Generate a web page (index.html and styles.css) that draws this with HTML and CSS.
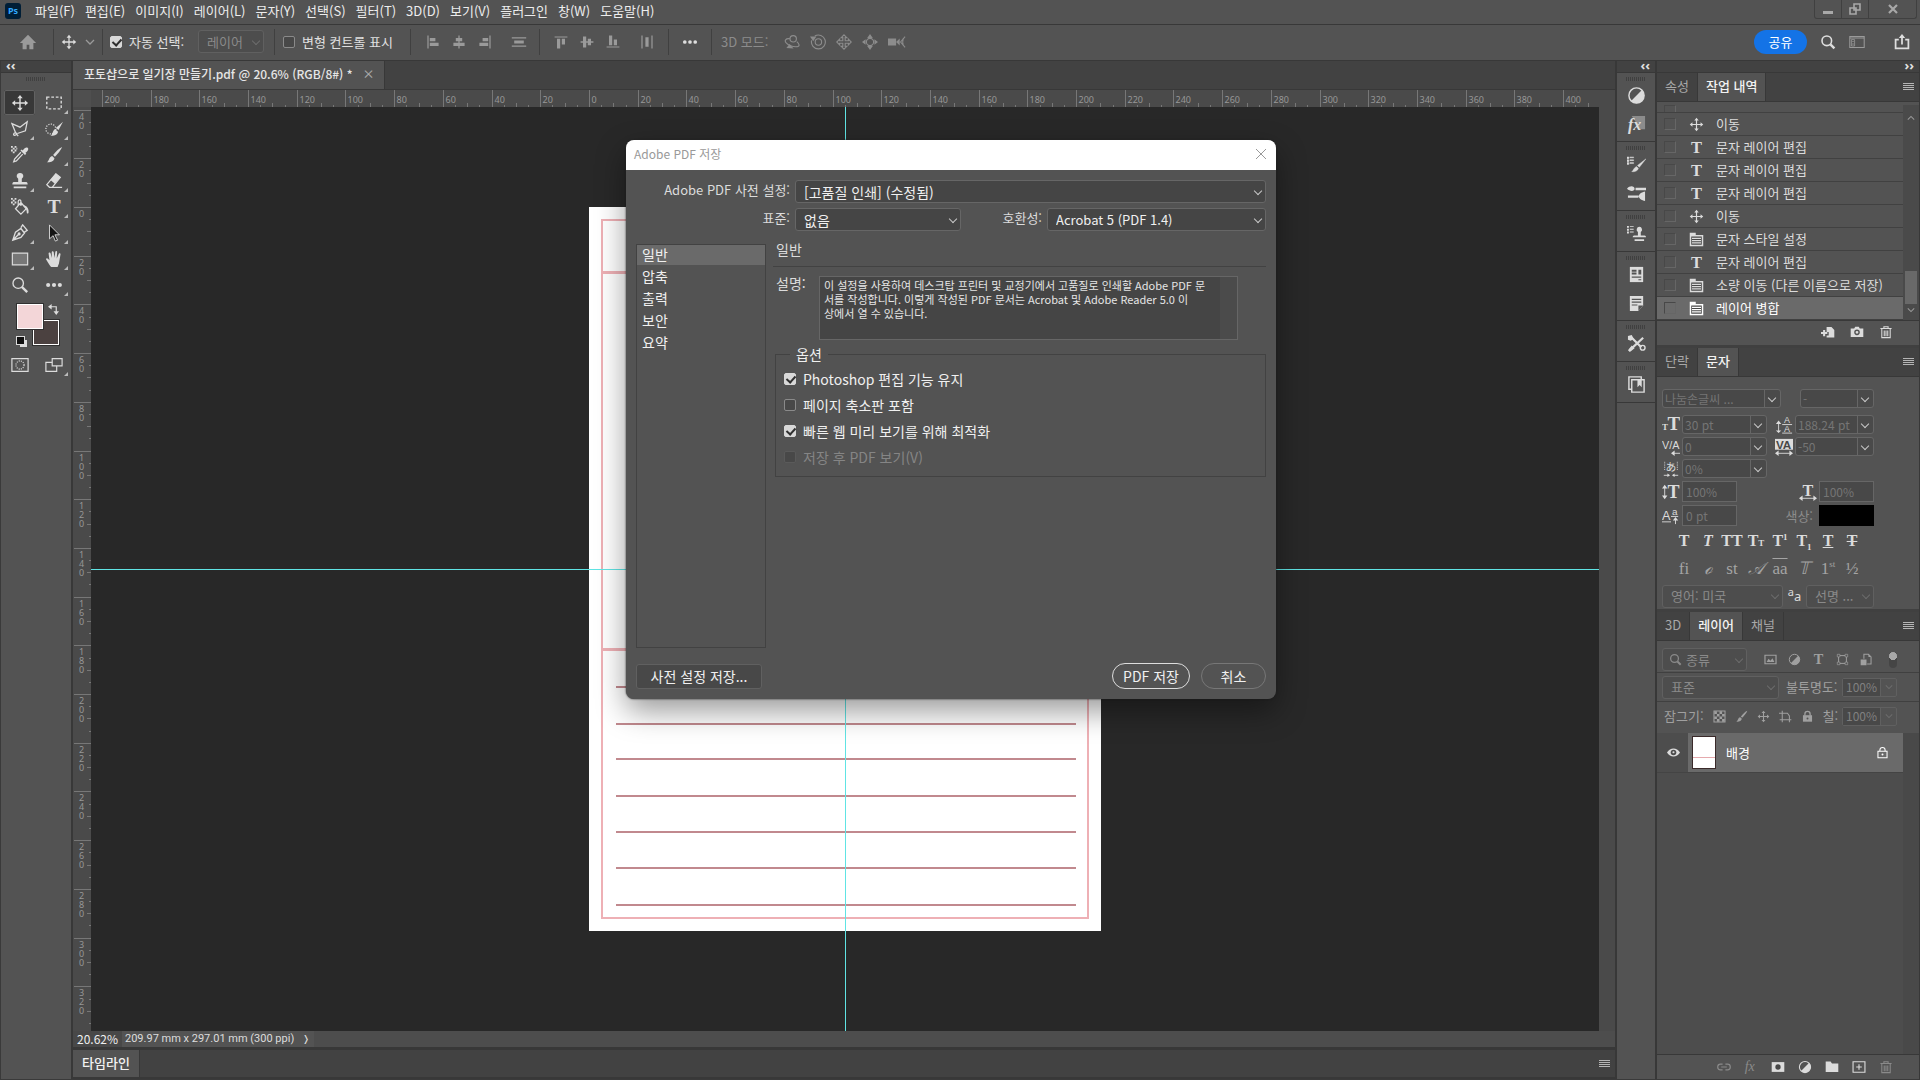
FILE: index.html
```html
<!DOCTYPE html>
<html lang="ko">
<head>
    <meta charset="UTF-8">
    <meta name="viewport" content="width=device-width, initial-scale=1.0">
    <title>포토샵으로 일기장 만들기.pdf</title>
    <link rel="stylesheet" href="styles.css">
</head>
<body>
    <!-- icon set -->
    <svg class="sprite" aria-hidden="true">
        <symbol id="move" viewBox="0 0 20 20"><path d="M10 1l3 3.600h-2.200v4.600h4.600V7L19 10l-3.600 3v-2.200h-4.600v4.600H13L10 19l-3-3.600h2.200v-4.600H4.600V13L1 10l3.600-3v2.200h4.600V4.600H7z" fill="currentColor"/></symbol>
        <symbol id="home" viewBox="0 0 20 20"><path d="M10 2L1 11h3v7h4.500v-5h3v5H16v-7h3z" fill="currentColor"/></symbol>
        <symbol id="chev" viewBox="0 0 10 10"><path d="M1 3l4 4 4-4" fill="none" stroke="currentColor" stroke-width="1.300"/></symbol>
        <symbol id="al-left" viewBox="0 0 20 20"><path d="M3 2h1.500v16H3zM6 5h7v4H6zM6 11h11v4H6z" fill="currentColor"/></symbol>
        <symbol id="al-center" viewBox="0 0 20 20"><path d="M9.200 2h1.600v16H9.200zM6 5h8v4H6zM3 11h14v4H3z" fill="currentColor"/></symbol>
        <symbol id="al-right" viewBox="0 0 20 20"><path d="M15.500 2H17v16h-1.500zM7 5h7v4H7zM3 11h11v4H3z" fill="currentColor"/></symbol>
        <symbol id="dist-v" viewBox="0 0 20 20"><path d="M1 4h18v1.500H1zM4 8h12v4H4zM1 14.500h18V16H1z" fill="currentColor"/></symbol>
        <symbol id="al-top" viewBox="0 0 20 20"><path d="M2 3h16v1.500H2zM5 6h4v12H5zM11 6h4v7h-4z" fill="currentColor"/></symbol>
        <symbol id="al-mid" viewBox="0 0 20 20"><path d="M2 9.200h16v1.600H2zM5 3h4v14H5zM11 6h4v8h-4z" fill="currentColor"/></symbol>
        <symbol id="al-bot" viewBox="0 0 20 20"><path d="M2 15.500h16V17H2zM5 2h4v12H5zM11 7h4v7h-4z" fill="currentColor"/></symbol>
        <symbol id="dist-h" viewBox="0 0 20 20"><path d="M3 2h1.500v16H3zM8 4h4v12H8zM15.500 2H17v16h-1.500z" fill="currentColor"/></symbol>
        <symbol id="dots" viewBox="0 0 20 20"><g fill="currentColor"><circle cx="3.500" cy="10" r="2.300"/><circle cx="10" cy="10" r="2.300"/><circle cx="16.500" cy="10" r="2.300"/></g></symbol>
        <symbol id="orbit" viewBox="0 0 20 20"><g fill="none" stroke="currentColor" stroke-width="1.400"><circle cx="11.500" cy="6" r="4"/><path d="M7.500 6C2 5 0 8.500 3 11.500c3 3 8 4.500 12 4.500 5 0 5-3 1-6.500"/></g><path d="M3 17.500l9 .5-5-5.500z" fill="currentColor"/></symbol>
        <symbol id="roll" viewBox="0 0 20 20"><g fill="none" stroke="currentColor" stroke-width="1.400"><circle cx="10.500" cy="10" r="4"/><path d="M6 2.500a8.700 8.700 0 1 1-4 5.500"/></g><path d="M0 3h8L4 9z" fill="currentColor"/></symbol>
        <symbol id="pan3d" viewBox="0 0 20 20"><path d="M10 1l3.500 3.500h-2v4h4v-2L19 10l-3.500 3.500v-2h-4v4h2L10 19l-3.500-3.500h2v-4h-4v2L1 10l3.500-3.500v2h4v-4h-2z" fill="none" stroke="currentColor" stroke-width="1.400"/></symbol>
        <symbol id="slide3d" viewBox="0 0 20 20"><circle cx="10" cy="10" r="4.500" fill="none" stroke="currentColor" stroke-width="1.400"/><path d="M10 0l3.500 5h-7zM10 20l-3.500-5h7zM0 10l4.500-3.500v7zM20 10l-4.500 3.500v-7z" fill="currentColor"/></symbol>
        <symbol id="cam3d" viewBox="0 0 20 20"><path d="M0 6h9v8H0zM9 10l4-4v8z" fill="currentColor"/><path d="M19 4l-5 6 5 6M17 6c-1 3-1 5 0 8" fill="none" stroke="currentColor" stroke-width="1.200"/></symbol>
        <symbol id="search" viewBox="0 0 20 20"><circle cx="8.500" cy="8.500" r="6" fill="none" stroke="currentColor" stroke-width="2"/><path d="M13 13l5 5" stroke="currentColor" stroke-width="3"/></symbol>
        <symbol id="workspace" viewBox="0 0 20 20"><path d="M1 3h18v14H1zM1 5h18" fill="none" stroke="currentColor" stroke-width="1.300"/><path d="M3 7h4v8H3z" fill="none" stroke="currentColor"/><path d="M4 9h2v1H4zM4 12h2v1H4z" fill="currentColor"/></symbol>
        <symbol id="share" viewBox="0 0 20 20"><path d="M6 7H2v11h16V7h-4M10 13V3" fill="none" stroke="currentColor" stroke-width="2.200"/><path d="M10 0l4 5H6z" fill="currentColor"/></symbol>
        <symbol id="menu" viewBox="0 0 12 10"><path d="M0 1.500h11M0 3.500h11M0 5.500h11M0 7.500h11" stroke="currentColor"/></symbol>
        <symbol id="marquee" viewBox="0 0 20 20"><rect x="2" y="3.500" width="16" height="13" fill="none" stroke="currentColor" stroke-width="1.500" stroke-dasharray="3 2"/></symbol>
        <symbol id="lasso" viewBox="0 0 20 20"><path d="M5 14L1 4l9 4 8-6-2 10-9 3M5 14c-2 0-3 3-1 3s3-2 1-3l3 4" fill="none" stroke="currentColor" stroke-width="1.400"/></symbol>
        <symbol id="qselect" viewBox="0 0 20 20"><circle cx="6.500" cy="10" r="5.500" fill="none" stroke="currentColor" stroke-width="1.400" stroke-dasharray="1.300 1.500"/><path d="M20 2l-5 9-3-2zM11 10l3.500 3C14 16.500 10 18 6 17.500c3-1.500 2-5 5-7.500z" fill="currentColor"/></symbol>
        <symbol id="eyedrop" viewBox="0 0 20 20"><path d="M0 0h2v2H0zM4 0h2v2H4zM2 2h2v2H2zM0 4h2v2H0zM4 4h2v2H4zM2 6h2v2H2zM6 2h1v2H6z" fill="currentColor"/><path d="M13 5c2-3 4-4 5.500-3s.5 4-2.500 5.500l1 1-1.500 1.500-5-5L12 4z" fill="currentColor"/><path d="M11 7l-7 7.500-1 3 3-1L13 9" fill="none" stroke="currentColor" stroke-width="1.400"/></symbol>
        <symbol id="brush" viewBox="0 0 20 20"><path d="M19 1c-1 3-5 8-8 11L9 10c3-4 7-8 10-9zM8 11l2.500 2.500C10 17 6 18.500 2 18c3-1.500 2-6 6-7z" fill="currentColor"/></symbol>
        <symbol id="stamp" viewBox="0 0 20 20"><path d="M10 1a3.500 3.500 0 0 1 2 6.500V11h5c1 0 1.500 1 1.500 3h-17c0-2 .5-3 1.500-3h5V7.500A3.500 3.500 0 0 1 10 1zM3 16h14v2H3z" fill="currentColor"/></symbol>
        <symbol id="eraser" viewBox="0 0 20 20"><path d="M12 2l5 4-6 7-5-4z" fill="currentColor"/><path d="M12 2l5 4-9 11H5l-3-3zM5 17h14" fill="none" stroke="currentColor" stroke-width="1.400"/></symbol>
        <symbol id="bucket" viewBox="0 0 20 20"><path d="M0 0h2v2H0zM4 0h2v2H4zM2 2h2v2H2zM0 4h2v2H0zM4 4h2v2H4zM2 6h2v2H2z" fill="currentColor"/><path d="M11 5l6 7-6 6-6-6zM11 9V4c0-3-3-2-3 0v4" fill="none" stroke="currentColor" stroke-width="1.400"/><path d="M13 8c4 0 7 3 6.500 8-.5 2-2 1.500-2 0S17 12 15 10z" fill="currentColor"/></symbol>
        <symbol id="type" viewBox="0 0 20 20"><text x="10" y="17" text-anchor="middle" font-family="Liberation Serif" font-size="22" font-weight="bold" fill="currentColor">T</text></symbol>
        <symbol id="pen" viewBox="0 0 20 20"><path d="M2 18L5 9l6-4 4 5-4 5zM2 18l6-6M11 4l2-3 5 6-3 2" fill="none" stroke="currentColor" stroke-width="1.500"/><circle cx="9" cy="11" r="1.700" fill="currentColor"/></symbol>
        <symbol id="arrow" viewBox="0 0 20 20"><path d="M5 1l11 11H11l3 6-2.500 1L9 13l-4 3.500z" fill="#151515" stroke="currentColor"/></symbol>
        <symbol id="rect" viewBox="0 0 20 20"><path d="M1.500 3.500h17v13h-17z" fill="#777" stroke="currentColor" stroke-width="1.300"/></symbol>
        <symbol id="hand" viewBox="0 0 20 20"><path d="M6 18C4 15 2 12 1 10c1-1.500 2-1 4 1.500L4 4c0-1.500 2-1.500 2.300 0L7.500 9V2.500c0-1.500 2-1.500 2.200 0L10.500 9l1-7c.3-1.500 2-1 2 .3L13 9.500 15.500 4c.8-1 2-.5 1.700 1L15.500 15l-1.500 4H7z" fill="currentColor"/></symbol>
        <symbol id="zoomt" viewBox="0 0 20 20"><circle cx="8" cy="8" r="5.800" fill="none" stroke="currentColor" stroke-width="1.500"/><path d="M12 12l6 6" stroke="currentColor" stroke-width="2.600"/></symbol>
        <symbol id="qmask" viewBox="0 0 20 20"><path d="M1 3h18v14H1z" fill="none" stroke="currentColor" stroke-width="1.300"/><circle cx="10" cy="10" r="4.500" fill="none" stroke="currentColor" stroke-width="1.300" stroke-dasharray="1.200 1.200"/></symbol>
        <symbol id="screen" viewBox="0 0 20 20"><path d="M1 7h12v10H1z" fill="none" stroke="currentColor" stroke-width="1.300"/><path d="M8 3h11v8H8z" fill="#535353" stroke="currentColor" stroke-width="1.300"/></symbol>
        <symbol id="swap" viewBox="0 0 12 12"><path d="M3 3h6v6" fill="none" stroke="currentColor" stroke-width="1.300"/><path d="M4 0v6L0 3zM6 8h6l-3 4z" fill="currentColor"/></symbol>
        <symbol id="adjust" viewBox="0 0 20 20"><circle cx="10" cy="10" r="8" fill="none" stroke="currentColor" stroke-width="1.500"/><path d="M15.700 4.300A8 8 0 0 1 4.300 15.700z" fill="currentColor"/></symbol>
        <symbol id="fxbox" viewBox="0 0 20 20"><path d="M5 1h14v14h-5z" fill="#8c8c8c"/><text x="1" y="16" font-family="Liberation Serif" font-style="italic" font-weight="bold" font-size="17" fill="currentColor">fx</text></symbol>
        <symbol id="fx" viewBox="0 0 20 20"><text x="1" y="15" font-family="Liberation Serif" font-style="italic" font-size="20" fill="currentColor">fx</text></symbol>
        <symbol id="brushes" viewBox="0 0 20 20"><path d="M0 2h2v2H0zM3 2h4v1H3zM0 5h2v2H0zM3 5h4v1H3zM0 8h2v2H0zM3 8h4v1H3zM20 4l-7 9-2-2zM10 12l2 2c-.5 3-4 4-7 3.500 2-1.500 2-4 5-5.500z" fill="currentColor" stroke="currentColor" stroke-width=".4"/></symbol>
        <symbol id="brushset" viewBox="0 0 20 20"><path d="M0 5c3-4 8-3 8 0s-5 3-8 0zM9 4h11v2.500H9zM1 12h11v2.500H1zM12 13c2-4 4-4 7-5v10c-3-1-5-1-7-5z" fill="currentColor"/></symbol>
        <symbol id="clone" viewBox="0 0 20 20"><path d="M0 2h2v2H0zM3 2h4v1H3zM0 5h2v2H0zM3 5h4v1H3zM0 8h2v2H0zM3 8h4v1H3zM13 3a3 3 0 0 1 1.500 5.500V12h4c1 0 1.500 1 1.500 2H6c0-1 .5-2 1.500-2h4V8.500A3 3 0 0 1 13 3zM8 16h10v2H8z" fill="currentColor"/></symbol>
        <symbol id="library" viewBox="0 0 20 20"><path d="M3 2h14v16H3z" fill="currentColor"/><path d="M5 5h5v2H5zM5 8h5v2H5zM12 5h3v5h-3zM5 12h10v1.500H5zM12 15h3v1h-3z" fill="#535353"/></symbol>
        <symbol id="notes" viewBox="0 0 20 20"><path d="M3 2h14v10l-5 6H3z" fill="currentColor"/><path d="M5 5h10v1.200H5zM5 8h10v1.200H5zM5 11h6v1.200H5zM12 18v-6h5z" fill="#535353"/></symbol>
        <symbol id="tools" viewBox="0 0 20 20"><path d="M5 4l10 10M3 17L17 4" stroke="currentColor" stroke-width="2.300"/><path d="M1 2l4-1 2 4-3 2-3-1zM1 17l4-5 3 3-5 4z" fill="currentColor"/><circle cx="16.500" cy="14.500" r="2.500" fill="none" stroke="currentColor" stroke-width="1.500"/></symbol>
        <symbol id="book" viewBox="0 0 20 20"><path d="M5 15H2V2h13v3M5 5h13v13H5z" fill="none" stroke="currentColor" stroke-width="1.500"/><path d="M11 5h4.500v8l-2.200-2.500L11 13z" fill="currentColor"/></symbol>
        <symbol id="doc" viewBox="0 0 20 20"><path d="M1 1h8v3h10v15H1z" fill="currentColor"/><path d="M3 6h14v11H3z" fill="#484848"/><path d="M4 8.500h12M4 11.500h12M4 14.500h12" stroke="currentColor" stroke-width="1.400"/></symbol>
        <symbol id="newdoc" viewBox="0 0 20 20"><path d="M8 3h7l4 4v11H8v-3h3v-5H8z" fill="currentColor"/><path d="M0 10h9v3H0zM3 7h3v9H3z" fill="currentColor"/></symbol>
        <symbol id="camera" viewBox="0 0 20 20"><path d="M1 5h5l1.500-2.500h5L14 5h5v12H1z" fill="currentColor"/><circle cx="10" cy="10.500" r="3" fill="none" stroke="#535353" stroke-width="2"/></symbol>
        <symbol id="trash" viewBox="0 0 20 20"><path d="M2 5h16M7 5V2.500h6V5M4 5v13h12V5M7.500 8v8M10 8v8M12.500 8v8" fill="none" stroke="currentColor" stroke-width="1.500"/></symbol>
        <symbol id="image" viewBox="0 0 20 20"><path d="M1.500 3.500h17v13h-17z" fill="none" stroke="currentColor" stroke-width="1.800"/><path d="M4 14l3-5 3 3 3-4 3 6z" fill="currentColor"/></symbol>
        <symbol id="shape" viewBox="0 0 20 20"><path d="M4 4h12v12H4z" fill="none" stroke="currentColor" stroke-width="1.500"/><path d="M2 2h4v4H2zM14 2h4v4h-4zM2 14h4v4H2zM14 14h4v4h-4z" fill="#535353" stroke="currentColor"/></symbol>
        <symbol id="smart" viewBox="0 0 20 20"><path d="M6 9V2h7l4 4v11h-6" fill="none" stroke="currentColor" stroke-width="1.600"/><path d="M13 2v4h4M1 10h9v9H1z" fill="currentColor"/></symbol>
        <symbol id="checker" viewBox="0 0 20 20"><path d="M1.500 1.500h17v17h-17z" fill="none" stroke="currentColor" stroke-width="1.600"/><path d="M2 2h4v4H2zM10 2h4v4h-4zM6 6h4v4H6zM14 6h4v4h-4zM2 10h4v4H2zM10 10h4v4h-4zM6 14h4v4H6zM14 14h4v4h-4z" fill="currentColor"/></symbol>
        <symbol id="artboard" viewBox="0 0 20 20"><path d="M0 5h5M5 1v4M5 15v4M1 15h18M16 9v10M5 5h8l3 4v6H5z" fill="none" stroke="currentColor" stroke-width="1.600"/></symbol>
        <symbol id="lockf" viewBox="0 0 20 20"><path d="M3 8h14v10H3z" fill="currentColor"/><path d="M6 9V6c0-5 8-5 8 0v3" fill="none" stroke="currentColor" stroke-width="2"/><circle cx="10" cy="13" r="1.500" fill="#535353"/></symbol>
        <symbol id="lock" viewBox="0 0 20 20"><path d="M3 8h14v10H3zM6 8V6c0-5 8-5 8 0v2" fill="none" stroke="currentColor" stroke-width="1.600"/><circle cx="10" cy="13" r="1.500" fill="currentColor"/></symbol>
        <symbol id="eye" viewBox="0 0 20 20"><path d="M0 10C5 2 15 2 20 10 15 18 5 18 0 10z" fill="currentColor"/><circle cx="10" cy="10" r="4.300" fill="#4d4d4d"/><circle cx="10" cy="9.500" r="1.600" fill="currentColor"/></symbol>
        <symbol id="link" viewBox="0 0 20 20"><path d="M8 6H5a4 4 0 0 0 0 8h3M12 6h3a4 4 0 0 1 0 8h-3M6 10h8" fill="none" stroke="currentColor" stroke-width="1.700"/></symbol>
        <symbol id="mask" viewBox="0 0 20 20"><path d="M1 3h18v14H1z" fill="currentColor"/><circle cx="10" cy="10" r="3.800" fill="#484848"/></symbol>
        <symbol id="folder" viewBox="0 0 20 20"><path d="M1 2h7l2 3h9v12H1z" fill="currentColor"/></symbol>
        <symbol id="new" viewBox="0 0 20 20"><path d="M1.500 2.500h17v15h-17zM10 6v8M6 10h8" fill="none" stroke="currentColor" stroke-width="1.600"/></symbol>
        <symbol id="c-size" viewBox="0 0 20 20"><g font-family="Liberation Serif" font-weight="bold" fill="currentColor"><text x="0" y="16" font-size="10">T</text><text x="6" y="16" font-size="21">T</text></g></symbol>
        <symbol id="c-lead" viewBox="0 0 20 20"><g font-family="Liberation Sans" font-size="10" fill="currentColor"><text x="10" y="8">A</text><text x="10" y="18">A</text></g><path d="M8 9.500h11M8 19h11M4 8v9" stroke="currentColor"/><path d="M4 5l3 4H1zM4 19l3-3H1z" fill="currentColor"/></symbol>
        <symbol id="c-kern" viewBox="0 0 20 20"><text x="0" y="12" font-family="Liberation Sans" font-size="12" fill="currentColor">V/A</text><path d="M12 17h8" stroke="currentColor"/><path d="M10 17l4-3v6z" fill="currentColor"/></symbol>
        <symbol id="c-track" viewBox="0 0 20 20"><path d="M0 1h20v12H0z" fill="currentColor"/><text x="1" y="12" font-family="Liberation Sans" font-weight="bold" font-size="13" fill="#484848">VA</text><path d="M3 17h14" stroke="currentColor"/><path d="M0 17l4-3v6zM20 17l-4 3v-6z" fill="currentColor"/></symbol>
        <symbol id="c-tsume" viewBox="0 0 20 20"><text x="4" y="12" font-family="Noto Sans CJK JP" font-size="12" fill="currentColor">あ</text><path d="M3 2v10M17 2v10" stroke="currentColor" stroke-dasharray="1 1"/><path d="M2 17h5M13 17h5" stroke="currentColor"/><path d="M9 17l-3-2v4zM11 17l3 2v-4z" fill="currentColor"/></symbol>
        <symbol id="c-vscale" viewBox="0 0 20 20"><text x="6" y="17" font-family="Liberation Serif" font-weight="bold" font-size="20" fill="currentColor">T</text><path d="M3 5v10" stroke="currentColor"/><path d="M3 2l3 4H0zM3 18l3-4H0z" fill="currentColor"/></symbol>
        <symbol id="c-hscale" viewBox="0 0 20 20"><text x="4" y="14" font-family="Liberation Serif" font-weight="bold" font-size="18" fill="currentColor">T</text><path d="M3 17h14" stroke="currentColor"/><path d="M0 17l4-3v6zM20 17l-4 3v-6z" fill="currentColor"/></symbol>
        <symbol id="c-base" viewBox="0 0 20 20"><g font-family="Liberation Sans" fill="currentColor"><text x="0" y="14" font-size="14">A</text><text x="11" y="9" font-size="11">a</text></g><path d="M0 16.500h10M10 10.500h8M15 13v6" stroke="currentColor"/><path d="M15 11l3 4h-6z" fill="currentColor"/></symbol>
    </svg>

    <header class="menubar">
        <span class="ps-logo">Ps</span>
        <nav class="menus">
            <a href="#">파일(F)</a><a href="#">편집(E)</a><a href="#">이미지(I)</a><a href="#">레이어(L)</a><a href="#">문자(Y)</a><a href="#">선택(S)</a><a href="#">필터(T)</a><a href="#">3D(D)</a><a href="#">보기(V)</a><a href="#">플러그인</a><a href="#">창(W)</a><a href="#">도움말(H)</a>
        </nav>
        <div class="win-buttons">
            <button aria-label="최소화"><svg viewBox="0 0 12 12"><path d="M1 8h10v3H1z" fill="currentColor"/></svg></button>
            <button aria-label="이전 크기로"><svg viewBox="0 0 12 12"><path d="M1 5h6v6H1zM5 1h6v6H5z" fill="none" stroke="currentColor" stroke-width="1.600"/></svg></button>
            <button class="win-close" aria-label="닫기"><svg viewBox="0 0 12 12"><path d="M2 2l8 8M10 2l-8 8" stroke="currentColor" stroke-width="2.200"/></svg></button>
        </div>
    </header>

    <div class="options">
        <div class="opt home"><svg class="ic18"><use href="#home"/></svg></div>
        <div class="opt cur-tool"><svg class="ic16 bright"><use href="#move"/></svg><svg class="ic10"><use href="#chev"/></svg></div>
        <div class="opt auto">
            <label class="check"><input type="checkbox" checked>자동 선택:</label>
            <span class="drop dim"><select aria-label="자동 선택 대상" disabled><option>레이어</option></select></span>
        </div>
        <div class="opt show"><label class="check"><input type="checkbox">변형 컨트롤 표시</label></div>
        <div class="opt align-h"><svg class="ic16"><use href="#al-left"/></svg><svg class="ic16"><use href="#al-center"/></svg><svg class="ic16"><use href="#al-right"/></svg><svg class="ic16 last"><use href="#dist-v"/></svg></div>
        <div class="opt align-v"><svg class="ic16"><use href="#al-top"/></svg><svg class="ic16"><use href="#al-mid"/></svg><svg class="ic16"><use href="#al-bot"/></svg><svg class="ic16 last"><use href="#dist-h"/></svg></div>
        <div class="opt more"><svg class="ic16 bright"><use href="#dots"/></svg></div>
        <div class="opt mode3d"><span>3D 모드:</span><svg class="ic16"><use href="#orbit"/></svg><svg class="ic16"><use href="#roll"/></svg><svg class="ic16"><use href="#pan3d"/></svg><svg class="ic16"><use href="#slide3d"/></svg><svg class="ic18"><use href="#cam3d"/></svg></div>
        <div class="opt-right">
            <button class="share">공유</button>
            <svg class="ic16 bright"><use href="#search"/></svg>
            <svg class="ic16"><use href="#workspace"/></svg>
            <svg class="ic16 bright"><use href="#share"/></svg>
        </div>
    </div>

    <main class="work">
        <aside class="toolbar">
            <div class="collapse">‹‹</div>
            <div class="grip"></div>
            <div class="tools">
                <button class="on" aria-label="이동"><svg><use href="#move"/></svg></button>
                <button class="sub" aria-label="선택 윤곽"><svg><use href="#marquee"/></svg></button>
                <button class="sub" aria-label="올가미"><svg><use href="#lasso"/></svg></button>
                <button class="sub" aria-label="빠른 선택"><svg><use href="#qselect"/></svg></button>
                <button aria-label="스포이드"><svg><use href="#eyedrop"/></svg></button>
                <button class="sub" aria-label="브러시"><svg><use href="#brush"/></svg></button>
                <button class="sub" aria-label="도장"><svg><use href="#stamp"/></svg></button>
                <button class="sub" aria-label="지우개"><svg><use href="#eraser"/></svg></button>
                <button aria-label="페인트 통"><svg><use href="#bucket"/></svg></button>
                <button class="sub" aria-label="문자"><svg><use href="#type"/></svg></button>
                <button class="sub" aria-label="펜"><svg><use href="#pen"/></svg></button>
                <button class="sub" aria-label="패스 선택"><svg><use href="#arrow"/></svg></button>
                <button class="sub" aria-label="사각형"><svg><use href="#rect"/></svg></button>
                <button class="sub" aria-label="손"><svg><use href="#hand"/></svg></button>
                <button aria-label="돋보기"><svg><use href="#zoomt"/></svg></button>
                <button class="sub" aria-label="도구 모음 편집"><svg><use href="#dots"/></svg></button>
            </div>
            <div class="swatches">
                <span class="bg"></span><span class="fg"></span>
                <svg class="swap"><use href="#swap"/></svg>
                <span class="def-bg"></span><span class="def-fg"></span>
            </div>
            <div class="tools">
                <button aria-label="빠른 마스크"><svg><use href="#qmask"/></svg></button>
                <button class="sub" aria-label="화면 모드"><svg><use href="#screen"/></svg></button>
            </div>
        </aside>

        <section class="document">
            <div class="doc-tabs"><div class="doc-tab">포토샵으로 일기장 만들기.pdf @ 20.6% (RGB/8#) *<button aria-label="닫기">×</button></div></div>
            <div class="viewport">
                <div class="corner"></div>
                <svg class="ruler" id="ruler-h"></svg>
                <div class="scroll-top"></div>
                <svg class="ruler" id="ruler-v"></svg>
                <div class="canvas">
                    <svg class="page" viewBox="0 0 512 724">
                        <g fill="none" stroke="#eeb0b5" stroke-width="2">
                            <path d="M13 13h486v698H13z"/>
                            <path d="M13 65.500h486M13 442.500h486" stroke-width="3"/>
                        </g>
                        <path d="M27 480h460M27 517h460M27 552h460M27 589h460M27 625h460M27 661h460M27 698h460" stroke="#c1898e" stroke-width="2"/>
                    </svg>
                    <div class="guide-v"></div>
                    <div class="guide-h"></div>
                </div>
                <div class="scroll"></div>
            </div>
            <div class="status"><span class="zoom">20.62%</span><span class="size">209.97 mm x 297.01 mm (300 ppi)<b>❭</b></span></div>
            <div class="timeline"><span class="tab on">타임라인</span><svg class="burger"><use href="#menu"/></svg></div>
        </section>

        <aside class="dock">
            <div class="collapse right">‹‹</div>
            <div class="group"><i class="grip"></i><svg><use href="#adjust"/></svg><svg><use href="#fxbox"/></svg></div>
            <div class="group"><i class="grip"></i><svg><use href="#brushes"/></svg><svg><use href="#brushset"/></svg></div>
            <div class="group"><i class="grip"></i><svg><use href="#clone"/></svg></div>
            <div class="group"><i class="grip"></i><svg><use href="#library"/></svg><svg><use href="#notes"/></svg></div>
            <div class="group"><i class="grip"></i><svg><use href="#tools"/></svg></div>
            <div class="group"><i class="grip"></i><svg><use href="#book"/></svg></div>
        </aside>

        <aside class="panels">
            <div class="collapse right">››</div>

            <div class="tabs"><span class="tab">속성</span><span class="tab on">작업 내역</span><svg class="burger"><use href="#menu"/></svg></div>
            <div class="history">
                <ul>
                    <li class="cut"><i></i></li>
                    <li><i></i><svg><use href="#move"/></svg>이동</li>
                    <li><i></i><svg><use href="#type"/></svg>문자 레이어 편집</li>
                    <li><i></i><svg><use href="#type"/></svg>문자 레이어 편집</li>
                    <li><i></i><svg><use href="#type"/></svg>문자 레이어 편집</li>
                    <li><i></i><svg><use href="#move"/></svg>이동</li>
                    <li><i></i><svg><use href="#doc"/></svg>문자 스타일 설정</li>
                    <li><i></i><svg><use href="#type"/></svg>문자 레이어 편집</li>
                    <li><i></i><svg><use href="#doc"/></svg>소량 이동 (다른 이름으로 저장)</li>
                    <li class="on"><i></i><svg><use href="#doc"/></svg>레이어 병합</li>
                </ul>
                <div class="bar"><svg class="up"><use href="#chev"/></svg><span class="thumb"></span><svg><use href="#chev"/></svg></div>
            </div>
            <div class="hist-foot"><svg><use href="#newdoc"/></svg><svg><use href="#camera"/></svg><svg><use href="#trash"/></svg></div>

            <div class="tabs"><span class="tab">단락</span><span class="tab on">문자</span><svg class="burger"><use href="#menu"/></svg></div>
            <div class="character">
                <div class="crow fonts">
                    <span class="drop split"><select aria-label="글꼴" disabled><option>나눔손글씨 ...</option></select></span>
                    <span class="drop split"><select aria-label="글꼴 스타일" disabled><option>-</option></select></span>
                </div>
                <div class="crow">
                    <svg><use href="#c-size"/></svg><span class="drop split"><select aria-label="글꼴 크기" disabled><option>30 pt</option></select></span>
                    <svg><use href="#c-lead"/></svg><span class="drop split"><select aria-label="행간" disabled><option>188.24 pt</option></select></span>
                </div>
                <div class="crow">
                    <svg><use href="#c-kern"/></svg><span class="drop split"><select aria-label="커닝" disabled><option>0</option></select></span>
                    <svg><use href="#c-track"/></svg><span class="drop split"><select aria-label="자간" disabled><option>-50</option></select></span>
                </div>
                <div class="crow">
                    <svg><use href="#c-tsume"/></svg><span class="drop split"><select aria-label="비율 간격" disabled><option>0%</option></select></span>
                </div>
                <div class="crow scale">
                    <svg><use href="#c-vscale"/></svg><input type="text" aria-label="세로 비율" value="100%" disabled>
                    <svg class="push"><use href="#c-hscale"/></svg><input type="text" aria-label="가로 비율" value="100%" disabled>
                </div>
                <div class="crow scale">
                    <svg><use href="#c-base"/></svg><input type="text" aria-label="기준선 이동" value="0 pt" disabled>
                    <span class="push clabel">색상:</span><span class="color"></span>
                </div>
                <div class="styles">
                    <button><b>T</b></button><button><i>T</i></button><button>TT</button><button>T<small>T</small></button><button>T<sup>1</sup></button><button>T<sub>1</sub></button><button><u>T</u></button><button><s>T</s></button>
                </div>
                <div class="styles ot">
                    <button>fi</button><button><i>&#x2134;</i></button><button>st</button><button><i>&#x1d49c;</i></button><button><span class="over">aa</span></button><button><i>&#x1d54b;</i></button><button>1<sup>st</sup></button><button>½</button>
                </div>
                <div class="crow lang">
                    <span class="drop dim"><select aria-label="언어" disabled><option>영어: 미국</option></select></span>
                    <span class="aa"><sup>a</sup>a</span>
                    <span class="drop dim"><select aria-label="앤티 앨리어스" disabled><option>선명 ...</option></select></span>
                </div>
            </div>

            <div class="tabs"><span class="tab">3D</span><span class="tab on">레이어</span><span class="tab">채널</span><svg class="burger"><use href="#menu"/></svg></div>
            <div class="lrow filter">
                <span class="drop dim kind"><svg><use href="#search"/></svg><select aria-label="필터 종류" disabled><option>종류</option></select></span>
                <svg><use href="#image"/></svg><svg><use href="#adjust"/></svg><svg><use href="#type"/></svg><svg><use href="#shape"/></svg><svg><use href="#smart"/></svg><span class="toggle"></span>
            </div>
            <div class="lrow blend">
                <span class="drop dim"><select aria-label="혼합 모드" disabled><option>표준</option></select></span>
                <label for="opacity">불투명도:</label><span class="num"><input id="opacity" type="text" value="100%" disabled><svg><use href="#chev"/></svg></span>
            </div>
            <div class="lrow locks">
                <span>잠그기:</span><svg><use href="#checker"/></svg><svg><use href="#brush"/></svg><svg><use href="#move"/></svg><svg><use href="#artboard"/></svg><svg><use href="#lockf"/></svg>
                <label for="fill">칠:</label><span class="num"><input id="fill" type="text" value="100%" disabled><svg><use href="#chev"/></svg></span>
            </div>
            <div class="layers">
                <div class="layer">
                    <span class="vis"><svg><use href="#eye"/></svg></span>
                    <span class="name"><i class="thumb"></i>배경<svg><use href="#lock"/></svg></span>
                </div>
            </div>
            <div class="layer-foot"><svg class="off"><use href="#link"/></svg><svg class="off"><use href="#fx"/></svg><svg><use href="#mask"/></svg><svg><use href="#adjust"/></svg><svg><use href="#folder"/></svg><svg><use href="#new"/></svg><svg class="off"><use href="#trash"/></svg></div>
        </aside>
    </main>

    <div class="dialog" role="dialog" aria-labelledby="dlg-title">
        <div class="dlg-title"><span id="dlg-title">Adobe PDF 저장</span><button aria-label="닫기"><svg viewBox="0 0 12 12"><path d="M1 1l10 10M11 1L1 11" stroke="currentColor"/></svg></button></div>
        <div class="dlg-body">
            <div class="preset">
                <label for="preset">Adobe PDF 사전 설정:</label>
                <span class="drop wide"><select id="preset"><option>[고품질 인쇄] (수정됨)</option></select></span>
                <label for="standard">표준:</label>
                <span class="drop"><select id="standard"><option>없음</option></select></span>
                <label for="compat">호환성:</label>
                <span class="drop compat"><select id="compat"><option>Acrobat 5 (PDF 1.4)</option></select></span>
            </div>
            <div class="dlg-main">
                <ul class="sections"><li class="on">일반</li><li>압축</li><li>출력</li><li>보안</li><li>요약</li></ul>
                <div class="general">
                    <h2>일반</h2>
                    <div class="desc">
                        <label for="desc">설명:</label>
                        <textarea id="desc" wrap="off">이 설정을 사용하여 데스크탑 프린터 및 교정기에서 고품질로 인쇄할 Adobe PDF 문
서를 작성합니다. 이렇게 작성된 PDF 문서는 Acrobat 및 Adobe Reader 5.0 이
상에서 열 수 있습니다.</textarea>
                    </div>
                    <fieldset>
                        <legend>옵션</legend>
                        <label class="check"><input type="checkbox" checked>Photoshop 편집 기능 유지</label>
                        <label class="check"><input type="checkbox">페이지 축소판 포함</label>
                        <label class="check"><input type="checkbox" checked>빠른 웹 미리 보기를 위해 최적화</label>
                        <label class="check off"><input type="checkbox" disabled>저장 후 PDF 보기(V)</label>
                    </fieldset>
                </div>
            </div>
            <div class="dlg-foot">
                <button class="save-preset">사전 설정 저장...</button>
                <button class="pill primary">PDF 저장</button>
                <button class="pill">취소</button>
            </div>
        </div>
    </div>

    <script src="rulers.js"></script>
</body>
</html>
```

FILE: styles.css
```css
* {
    box-sizing: border-box;
}
body {
    margin: 0;
    height: 100vh;
    display: flex;
    flex-direction: column;
    overflow: hidden;
    background: #535353;
    color: #dcdcdc;
    font-family: "Noto Sans CJK KR", "Noto Sans", sans-serif;
    font-size: 13px;
    line-height: 18px;
}
button, select, input, textarea {
    font: inherit;
    color: inherit;
    margin: 0;
    padding: 0;
    border: 0;
    background: none;
}
svg {
    display: block;
    flex: none;
}
ul {
    margin: 0;
    padding: 0;
    list-style: none;
}
.sprite {
    display: none;
}
.ic10 { width: 10px; height: 10px; }
.ic16 { width: 16px; height: 16px; }
.ic18 { width: 18px; height: 18px; }
.bright { color: #dedede; }

/* menu bar */
.menubar {
    display: flex;
    align-items: center;
    height: 25px;
    flex: none;
    padding: 0 0 2px 5px;
    border-bottom: 1px solid #383838;
}
.ps-logo {
    width: 16px;
    height: 16px;
    border-radius: 3px;
    background: #001e36;
    color: #31a8ff;
    font: bold 9px/16px "Noto Sans", sans-serif;
    text-align: center;
}
.menus {
    display: flex;
    gap: 10px;
    margin-left: 14px;
    flex: 1;
}
.menus a {
    color: #ededed;
    text-decoration: none;
}
.win-buttons {
    display: flex;
    align-self: flex-start;
    height: 19px;
    margin-right: 3px;
    border: 1px solid #404040;
    border-top: 0;
    border-radius: 0 0 3px 3px;
}
.win-buttons button {
    width: 27px;
    display: flex;
    align-items: center;
    justify-content: center;
    border-right: 1px solid #404040;
    color: #a8a8a8;
}
.win-buttons .win-close {
    width: 47px;
    border: 0;
}
.win-buttons svg {
    width: 12px;
    height: 12px;
}

/* options bar */
.options {
    display: flex;
    align-items: center;
    height: 36px;
    flex: none;
    padding-bottom: 2px;
    border-bottom: 1px solid #383838;
}
.opt {
    display: flex;
    align-items: center;
    height: 26px;
    color: #9a9a9a;
    border-right: 1px solid #404040;
}
.home { width: 54px; padding-left: 19px; }
.cur-tool { width: 49px; padding-left: 7px; gap: 8px; }
.auto { width: 172px; padding-left: 7px; gap: 14px; }
.auto .check { gap: 7px; }
.auto .drop { width: 66px; }
.show { width: 136px; padding-left: 8px; }
.show .check { gap: 7px; }
.align-h { width: 129px; padding-left: 14px; gap: 10px; }
.align-v { width: 129px; padding-left: 13px; gap: 10px; }
.opt .last { margin-left: 8px; }
.more { width: 43px; padding-left: 13px; }
.mode3d { padding-left: 9px; gap: 10px; border: 0; color: #8c8c8c; }
.mode3d span { margin-right: 6px; }
.opt-right {
    display: flex;
    align-items: center;
    gap: 13px;
    margin-left: auto;
    padding-right: 10px;
    color: #9a9a9a;
}
.opt-right .ic16:last-child {
    margin-left: 16px;
}
.share {
    width: 53px;
    height: 24px;
    border-radius: 12px;
    background: #1473e6;
    color: #fff;
}

.check {
    display: flex;
    align-items: center;
    gap: 8px;
    color: #e0e0e0;
    white-space: nowrap;
}
.check input {
    appearance: none;
    width: 12px;
    height: 12px;
    border: 1px solid #8a8a8a;
    border-radius: 2px;
    background: #484848;
    position: relative;
}
.check input:checked {
    background: #d8d8d8;
    border-color: #d8d8d8;
}
.check input:checked::after {
    content: "";
    position: absolute;
    left: 3px;
    top: 0;
    width: 4px;
    height: 7px;
    border: solid #303030;
    border-width: 0 2px 2px 0;
    transform: rotate(42deg);
}
.drop {
    position: relative;
    display: inline-flex;
    height: 23px;
    border: 1px solid #666;
    border-radius: 3px;
    background: #454545;
}
.drop select {
    appearance: none;
    width: 100%;
    padding: 0 16px 0 8px;
    opacity: 1;
}
.drop::after {
    content: "";
    position: absolute;
    right: 4px;
    top: 50%;
    width: 5px;
    height: 5px;
    margin-top: -4px;
    border: solid #c8c8c8;
    border-width: 0 1px 1px 0;
    transform: rotate(45deg);
    pointer-events: none;
}
.drop.dim {
    background: #4d4d4d;
    border-color: #606060;
    color: #8a8a8a;
}
.drop.dim::after {
    border-color: #6c6c6c;
}
.drop.split {
    height: 19px;
    background: linear-gradient(to left, #4a4a4a 15px, #666 15px, #666 16px, #484848 16px);
    color: #757575;
}
.drop.split select {
    padding-left: 2px;
    font-size: 12px;
}
.drop.split::after {
    right: 5px;
}

/* workspace */
.work {
    display: flex;
    flex: 1;
    min-height: 0;
    border-left: 1px solid #3a3a3a;
    border-bottom: 1px solid #3a3a3a;
}
.collapse {
    height: 12px;
    flex: none;
    padding: 0 5px;
    background: #424242;
    border-bottom: 1px solid #383838;
    color: #e0e0e0;
    font: bold 13px/8px "Noto Sans", sans-serif;
}
.collapse.right {
    text-align: right;
}
.grip {
    display: block;
    width: 20px;
    height: 4px;
    margin: 4px auto;
    background: repeating-linear-gradient(to right, #404040 0, #404040 1px, #535353 1px, #535353 2px);
}
.toolbar {
    width: 72px;
    flex: none;
    border-right: 2px solid #383838;
}
.tools {
    display: grid;
    grid-template-columns: 34px 34px;
    grid-auto-rows: 26px;
    padding-left: 2px;
    margin-top: 8px;
}
.tools button {
    position: relative;
    display: flex;
    align-items: center;
    justify-content: center;
    margin: 1px 2px 0 1px;
    color: #dcdcdc;
    border-radius: 2px;
}
.tools .on {
    background: #383838;
    outline: 1px solid #626262;
    outline-offset: -1px;
}
.tools svg {
    width: 18px;
    height: 18px;
}
.sub::after {
    content: "";
    position: absolute;
    right: 1px;
    bottom: 1px;
    border: 2px solid;
    border-color: transparent #bbb #bbb transparent;
}
.swatches {
    position: relative;
    height: 50px;
    margin-top: 6px;
}
.swatches span {
    position: absolute;
}
.fg, .bg {
    width: 26px;
    height: 25px;
    border: 1px solid #fff;
    outline: 1px solid #303030;
}
.fg { left: 16px; top: 1px; background: #f3d6d8; }
.bg { left: 32px; top: 17px; background: #4b4140; }
.swap {
    position: absolute;
    left: 47px;
    top: 1px;
    width: 11px;
    height: 11px;
}
.def-bg, .def-fg {
    width: 7px;
    height: 7px;
}
.def-fg { left: 16px; top: 34px; background: #111; outline: 1px solid #ddd; }
.def-bg { left: 19px; top: 37px; background: #ddd; }
.swatches + .tools {
    margin-top: -2px;
}

.document {
    flex: 1;
    min-width: 0;
    display: flex;
    flex-direction: column;
}
.doc-tabs {
    display: flex;
    height: 29px;
    flex: none;
    background: #424242;
    border-bottom: 1px solid #383838;
}
.doc-tab {
    display: flex;
    align-items: center;
    gap: 10px;
    padding: 0 9px 2px 11px;
    background: #535353;
    color: #e6e6e6;
    font-size: 12px;
    font-weight: 500;
    border-right: 1px solid #383838;
}
.doc-tab button {
    color: #aaa;
}
.viewport {
    flex: 1;
    min-height: 0;
    display: grid;
    grid-template-columns: 18px 1fr 16px;
    grid-template-rows: 17px 1fr;
    background: #4a4a4a;
}
.corner {
    background: #4f4f4f;
}
.ruler {
    width: 100%;
    height: 100%;
    min-height: 0;
    overflow: hidden;
    font: 9px "Noto Sans", sans-serif;
}
.ruler text { fill: #979797; }
.ruler line { stroke: #777; }
.canvas {
    position: relative;
    overflow: hidden;
    background: #282828;
}
.page {
    position: absolute;
    left: 498px;
    top: 100px;
    width: 512px;
    height: 724px;
    background: #fff;
}
.guide-v, .guide-h {
    position: absolute;
    background: #60e4e4;
}
.guide-v { left: 754px; top: 0; width: 1px; height: 100%; }
.guide-h { left: 0; top: 462px; width: 100%; height: 1px; }
.status {
    display: flex;
    height: 16px;
    flex: none;
    background: #4d4d4d;
    font-size: 12px;
    line-height: 15px;
}
.zoom {
    width: 49px;
    padding-left: 4px;
    background: #484848;
    color: #eee;
}
.size {
    padding: 0 4px 0 3px;
    background: #535353;
    font-family: Roboto, sans-serif;
    font-size: 11px;
}
.size b {
    margin-left: 8px;
    font: bold 9px "DejaVu Sans", sans-serif;
}
.timeline, .tabs {
    display: flex;
    align-items: stretch;
    flex: none;
    background: #424242;
}
.timeline {
    height: 32px;
    border-top: 3px solid #383838;
    border-bottom: 2px solid #383838;
}
.tab {
    padding: 0 8px;
    line-height: 25px;
    color: #a8a8a8;
    border-right: 1px solid #383838;
}
.tab.on {
    background: #535353;
    color: #f2f2f2;
    font-weight: 500;
}
.timeline .tab {
    padding: 0 9px;
}
.burger {
    width: 12px;
    height: 10px;
    margin: auto 4px auto auto;
    color: #b5b5b5;
}

/* icon dock */
.dock {
    width: 42px;
    flex: none;
    border: solid #383838;
    border-width: 0 2px;
    color: #dcdcdc;
}
.group {
    padding-top: 1px;
    border-bottom: 1px solid #383838;
}
.group .grip {
    margin: 3px auto 4px;
}
.group svg {
    width: 19px;
    height: 19px;
    margin: 5px auto 8px;
}
.group svg + svg {
    margin: 10px auto 7px;
}

/* right panels */
.panels {
    width: 263px;
    flex: none;
    display: flex;
    flex-direction: column;
    border-right: 1px solid #383838;
}
.tabs {
    height: 29px;
    border-bottom: 1px solid #383838;
}
.history {
    display: flex;
    height: 219px;
    flex: none;
    border-bottom: 1px solid #383838;
}
.history ul {
    flex: 1;
    padding-top: 3px;
}
.history li {
    display: flex;
    align-items: center;
    height: 23px;
    padding-left: 7px;
    border-bottom: 1px solid #414141;
}
.history li.cut {
    height: 8px;
    overflow: hidden;
    align-items: flex-start;
}
.history li.on {
    background: #6a6a6a;
    color: #fff;
}
.history li i {
    width: 12px;
    height: 12px;
    border: 1px solid #666;
    border-color: #484848 #666 #666 #484848;
}
.history li svg {
    width: 15px;
    height: 15px;
    margin: 0 12px 0 13px;
}
.bar {
    width: 16px;
    display: flex;
    flex-direction: column;
    align-items: center;
    justify-content: flex-end;
    margin-top: 3px;
    padding: 9px 0 6px;
    background: #4a4a4a;
}
.bar svg {
    width: 8px;
    height: 8px;
    color: #999;
    margin-top: 2px;
}
.bar .up {
    transform: rotate(180deg);
    margin: 0 0 auto;
}
.bar .thumb {
    width: 12px;
    height: 33px;
    background: #696969;
}
.hist-foot {
    display: flex;
    align-items: center;
    justify-content: flex-end;
    gap: 15px;
    height: 27px;
    flex: none;
    padding: 0 26px 2px 0;
    border-bottom: 3px solid #404040;
}
.hist-foot svg {
    width: 14px;
    height: 14px;
}
.character {
    height: 235px;
    flex: none;
    padding: 12px 0 0 5px;
    border-bottom: 3px solid #404040;
}
.crow {
    display: flex;
    align-items: center;
    width: 212px;
    height: 19px;
    margin-bottom: 3px;
    color: #dcdcdc;
}
.crow svg {
    width: 18px;
    height: 18px;
    margin-right: 2px;
}
.crow .drop { width: 85px; }
.crow .drop + svg { margin-left: 8px; }
.crow .drop:nth-child(4) { width: 79px; }
.fonts { margin-bottom: 7px; justify-content: space-between; }
.fonts .drop:first-child { width: 119px; }
.fonts .drop:nth-child(2) { width: 74px; }
.scale { height: 21px; }
.scale input {
    width: 55px;
    height: 21px;
    padding-left: 3px;
    border: 1px solid #666;
    background: #484848;
    color: #757575;
    font-size: 12px;
}
.push { margin-left: auto; }
.clabel { color: #8c8c8c; margin-right: 6px; }
.color {
    width: 55px;
    height: 21px;
    background: #000;
}
.styles {
    display: grid;
    grid-template-columns: repeat(8, 24px);
    height: 28px;
    padding-left: 10px;
    font: bold 16px/24px "Liberation Serif", serif;
    color: #dcdcdc;
}
.styles button {
    height: 24px;
    white-space: nowrap;
}
.styles small, .styles sup, .styles sub {
    font-size: 9px;
    line-height: 0;
}
.styles.ot {
    font-size: 17px;
    font-weight: normal;
    color: #a4a4a4;
}
.over {
    text-decoration: overline;
}
.crow.lang {
    height: 22px;
    margin: 0;
    justify-content: space-between;
}
.lang .drop:first-child { width: 121px; }
.lang .drop:nth-child(3) { width: 68px; }
.aa {
    font: 13px/16px "Noto Sans", sans-serif;
}
.aa sup { font-size: 11px; line-height: 0; }

.lrow {
    display: flex;
    align-items: center;
    height: 29px;
    flex: none;
    padding-left: 5px;
    border-bottom: 1px solid #404040;
    color: #a0a0a0;
    white-space: nowrap;
}
.lrow svg { width: 13px; height: 13px; }
.filter { height: 32px; padding-top: 6px; gap: 11px; }
.kind { width: 85px; margin-right: 6px; align-items: center; padding-left: 6px; }
.kind select { padding-left: 4px; }
.toggle {
    width: 8px;
    height: 16px;
    border-radius: 4px;
    background: radial-gradient(circle at 4px 4px, #a8a8a8 4px, #454545 4px);
    margin-left: 5px;
}
.blend .drop { width: 117px; margin-right: 7px; }
.num {
    display: flex;
    align-items: center;
    width: 55px;
    height: 19px;
    margin-left: auto;
    margin-right: 22px;
    border: 1px solid #606060;
    border-radius: 2px;
    color: #808080;
}
.num input {
    width: 38px;
    height: 17px;
    padding-left: 3px;
    border-right: 1px solid #606060;
    background: #484848;
    font-size: 12px;
}
.num svg { width: 8px; height: 8px; margin: auto; color: #6c6c6c; }
.locks { height: 31px; padding: 0 0 3px 7px; border: 0; gap: 9px; }
.locks .num { margin-left: auto; }
.locks label { margin-right: -6px; }
.layers {
    flex: 1;
    min-height: 0;
    background: linear-gradient(to left, #494949 16px, #4d4d4d 16px);
    border-bottom: 1px solid #383838;
}
.layer {
    display: flex;
    height: 40px;
    margin-right: 16px;
    border-bottom: 1px solid #444;
}
.vis {
    display: flex;
    align-items: center;
    width: 31px;
    padding-left: 10px;
}
.vis svg, .name svg { width: 13px; height: 13px; }
.name {
    flex: 1;
    display: flex;
    align-items: center;
    padding-left: 4px;
    background: #6a6a6a;
    color: #fff;
}
.name .thumb {
    width: 24px;
    height: 33px;
    margin-right: 10px;
    border: 1px solid #3a2a2a;
    background: linear-gradient(#fff 20px, #e5a9ad 20px, #e5a9ad 21px, #fff 21px);
}
.name svg { margin: 0 14px 0 auto; }
.layer-foot {
    display: flex;
    align-items: center;
    justify-content: flex-end;
    gap: 13px;
    height: 24px;
    flex: none;
    padding-right: 26px;
}
.layer-foot svg { width: 14px; height: 14px; }
.layer-foot .off { color: #8a8a8a; }

/* save dialog */
.dialog {
    position: absolute;
    left: 626px;
    top: 140px;
    width: 650px;
    border-radius: 8px;
    background: #535353;
    box-shadow: 0 12px 30px rgba(0, 0, 0, 0.4), 0 0 2px #222;
    font-size: 14px;
    line-height: 20px;
    overflow: hidden;
}
.dlg-title {
    display: flex;
    align-items: center;
    justify-content: space-between;
    height: 30px;
    padding: 0 9px 2px 8px;
    background: #fff;
    color: #999;
    font-size: 12px;
}
.dlg-title svg {
    width: 12px;
    height: 12px;
}
.dlg-body {
    padding: 10px;
}
.preset {
    display: grid;
    grid-template-columns: 149px 166px 76px 219px;
    column-gap: 5px;
    row-gap: 5px;
    justify-content: end;
    text-align: right;
    font-size: 13px;
}
.preset .drop {
    color: #f0f0f0;
    font-size: 14px;
}
.preset .compat { font-size: 13px; }
.wide { grid-column: span 3; }
.dlg-main {
    display: grid;
    grid-template-columns: 130px 1fr;
    gap: 7px;
    margin-top: 13px;
}
.sections {
    height: 404px;
    border: 1px solid #424242;
    color: #f0f0f0;
}
.sections li {
    height: 22px;
    padding-left: 5px;
    line-height: 18px;
}
.sections .on {
    background: linear-gradient(#6a6a6a 20px, transparent 20px);
}
h2 {
    height: 23px;
    margin: 0 0 9px;
    padding-left: 3px;
    font-size: 14px;
    line-height: 10px;
    font-weight: normal;
    border-bottom: 1px solid #424242;
}
.desc {
    display: flex;
    gap: 10px;
    padding-left: 3px;
}
.desc label {
    width: 33px;
    line-height: 14px;
}
.desc textarea {
    width: 419px;
    height: 64px;
    padding: 1px 4px;
    border: 1px solid #666;
    background: linear-gradient(to left, #4b4b4b 17px, #454545 17px);
    font-size: 11px;
    line-height: 14px;
    color: #e6e6e6;
    resize: none;
    overflow: hidden;
}
fieldset {
    margin: 4px 0 0 2px;
    height: 133px;
    border: 1px solid #424242;
    padding: 2px 8px;
}
legend {
    padding: 0 6px;
    margin-left: 6px;
    color: #f0f0f0;
}
fieldset .check {
    height: 26px;
    gap: 7px;
    color: #f0f0f0;
}
.check.off { color: #858585; }
.check.off input { border-color: #5a5a5a; }
.dlg-foot {
    display: flex;
    align-items: center;
    gap: 11px;
    margin-top: 15px;
    color: #f0f0f0;
}
.save-preset {
    width: 126px;
    height: 25px;
    margin-right: auto;
    border: 1px solid #606060;
    border-radius: 3px;
    background: #484848;
    line-height: 18px;
}
.pill {
    width: 65px;
    height: 26px;
    border: 1px solid #777;
    border-radius: 13px;
}
.primary {
    width: 78px;
    border-color: #ddd;
}
```

FILE: rulers.js
```js
// 20.6% zoom at 300 ppi: screen pixels per millimetre
const PX_PER_MM = 2.4354;
const NS = 'http://www.w3.org/2000/svg';

function add(svg, tag, attrs, text) {
    const el = document.createElementNS(NS, tag);
    for (const key in attrs) el.setAttribute(key, attrs[key]);
    if (text !== undefined) el.textContent = text;
    svg.appendChild(el);
}

function drawRulers() {
    const h = document.getElementById('ruler-h');
    const v = document.getElementById('ruler-v');
    const width = h.getBoundingClientRect().width;
    const height = v.getBoundingClientRect().height;

    for (let mm = -200; mm <= 2000; mm += 5) {
        const major = mm % 20 === 0;
        const len = major ? 17 : (mm % 10 === 0 ? 4 : 2);
        const label = String(Math.abs(mm));

        const x = Math.round(498 + mm * PX_PER_MM) + 0.5;
        if (x > 0 && x < width) {
            add(h, 'line', { x1: x, x2: x, y1: 17 - len, y2: 17 });
            if (major) add(h, 'text', { x: x + 2, y: 13 }, label);
        }

        const y = Math.round(100 + mm * PX_PER_MM) + 0.5;
        if (y > 0 && y < height) {
            add(v, 'line', { x1: 18 - len, x2: 18, y1: y, y2: y });
            if (major) {
                label.split('').forEach((d, i) => {
                    add(v, 'text', { x: 6, y: y + 9 + i * 9 }, d);
                });
            }
        }
    }
}

drawRulers();
```
